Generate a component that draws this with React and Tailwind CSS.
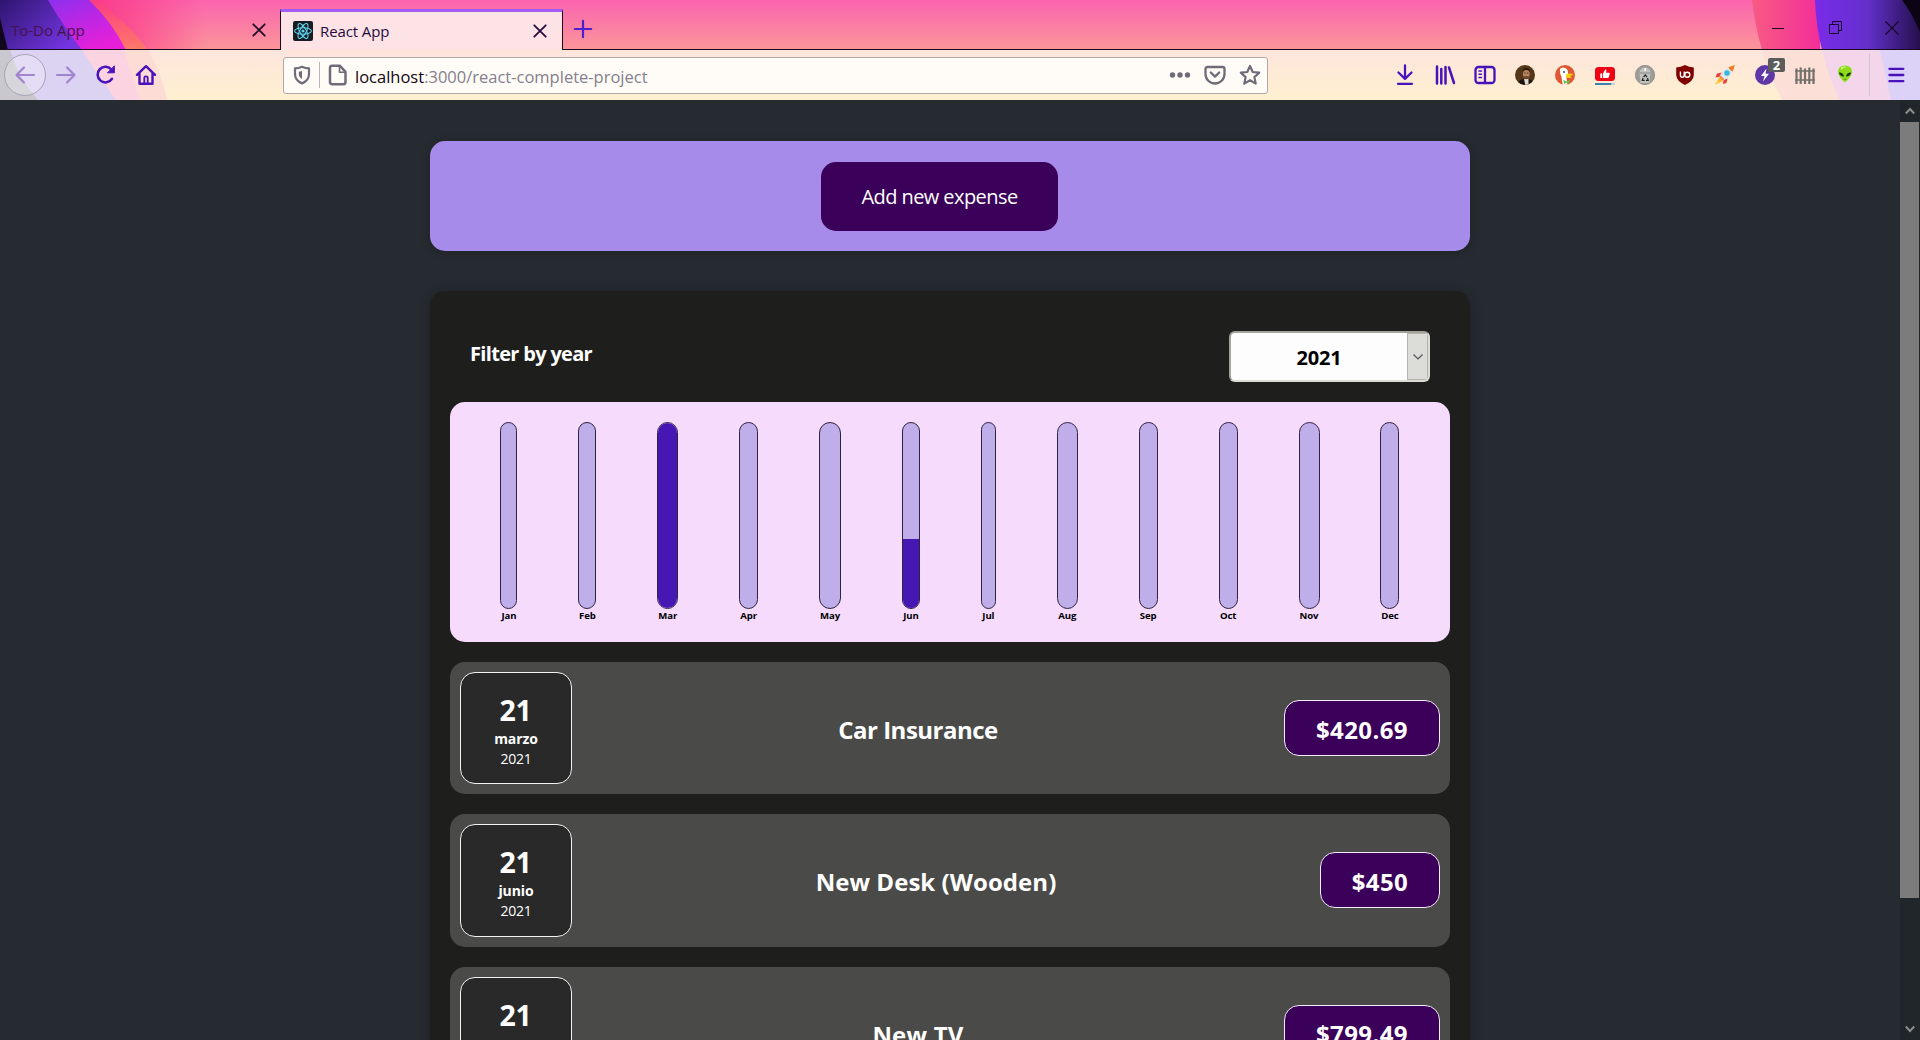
const months = [
  { name: "Jan", width: "w-[17px]", fill: 0 },
  { name: "Feb", width: "w-[18px]", fill: 0 },
  { name: "Mar", width: "w-[21px]", fill: 100 },
  { name: "Apr", width: "w-[19px]", fill: 0 },
  { name: "May", width: "w-[22px]", fill: 0 },
  { name: "Jun", width: "w-[18px]", fill: 37.5 },
  { name: "Jul", width: "w-[15px]", fill: 0 },
  { name: "Aug", width: "w-[21px]", fill: 0 },
  { name: "Sep", width: "w-[19px]", fill: 0 },
  { name: "Oct", width: "w-[19px]", fill: 0 },
  { name: "Nov", width: "w-[21px]", fill: 0 },
  { name: "Dec", width: "w-[19px]", fill: 0 },
];

const expenses = [
  { day: "21", month: "marzo", year: "2021", title: "Car Insurance", amount: "$420.69", tracking: "tracking-[-0.5px]", priceWidth: "w-[156px]" },
  { day: "21", month: "junio", year: "2021", title: "New Desk (Wooden)", amount: "$450", tracking: "tracking-[0.05px]", priceWidth: "w-[120px]" },
  { day: "21", title: "New TV", amount: "$799.49", tracking: "tracking-[0.2px]", priceWidth: "w-[156px]" },
];

/* ---------- Browser theme artwork ---------- */

function ThemeArt() {
  return (
    <svg className="absolute inset-0" width="1920" height="100" viewBox="0 0 1920 100" aria-hidden="true">
      <defs>
        <linearGradient id="pink" x1="0" y1="0" x2="0" y2="1">
          <stop offset="0" stopColor="#fb64ae" />
          <stop offset="0.5" stopColor="#fa7da4" />
          <stop offset="1" stopColor="#fb969a" />
        </linearGradient>
        <linearGradient id="indigoL" x1="0" y1="0" x2="1" y2="0.6">
          <stop offset="0" stopColor="#2d1670" />
          <stop offset="1" stopColor="#7434e0" />
        </linearGradient>
        <linearGradient id="violetL" x1="0" y1="0" x2="0.6" y2="1">
          <stop offset="0" stopColor="#8a30f0" />
          <stop offset="1" stopColor="#e81fd8" />
        </linearGradient>
        <linearGradient id="hotL" gradientUnits="userSpaceOnUse" x1="90" y1="0" x2="200" y2="-15">
          <stop offset="0" stopColor="#fb3a88" />
          <stop offset="1" stopColor="#fb3a88" stopOpacity="0" />
        </linearGradient>
        <linearGradient id="orangeL" x1="0" y1="0" x2="0" y2="1">
          <stop offset="0" stopColor="#fb3c84" />
          <stop offset="1" stopColor="#fd7a68" />
        </linearGradient>
        <linearGradient id="hotR" x1="0" y1="0" x2="1" y2="0">
          <stop offset="0" stopColor="#f85a84" />
          <stop offset="1" stopColor="#f22e98" />
        </linearGradient>
        <linearGradient id="indigoR" x1="0" y1="0" x2="1" y2="0">
          <stop offset="0" stopColor="#7a2bea" />
          <stop offset="0.5" stopColor="#6430cc" />
          <stop offset="1" stopColor="#24104c" />
        </linearGradient>
        <linearGradient id="wash" x1="0" y1="0" x2="0" y2="1">
          <stop offset="0" stopColor="#fde5dc" />
          <stop offset="1" stopColor="#fff0d0" />
        </linearGradient>
      </defs>
      <rect width="1920" height="50" fill="url(#pink)" />
      <path d="M84 0H260L220 50H120Z" fill="url(#hotL)" />
      <path d="M88 0H96Q128 22 148 50H120Z" fill="url(#orangeL)" />
      <path d="M40 0H89Q112 22 126 50H70Z" fill="url(#violetL)" />
      <path d="M0 0H48Q62 24 82 50H0Z" fill="url(#indigoL)" />
      <path d="M0 18L8 50H0Z" fill="#10061e" />
      <path d="M1752 0H1820V50H1762Q1755 25 1752 0Z" fill="url(#hotR)" />
      <path d="M1815 0H1920V50H1822Q1816 26 1815 0Z" fill="url(#indigoR)" />
      <path d="M1902 0H1920V32Q1913 15 1902 0Z" fill="#0c0414" />
      <rect y="50" width="1920" height="50" fill="url(#wash)" />
      <path d="M0 50H148Q162 74 167 100H0Z" fill="#fcdcd4" />
      <path d="M0 50H124L140 100H0Z" fill="#fcd3e0" />
      <path d="M0 50H82Q98 76 116 100H0Z" fill="#dcd2f2" />
      <path d="M0 50H10Q18 78 38 100H0Z" fill="#c9c8cf" />
      <path d="M1762 50H1920V100H1782Q1770 76 1762 50Z" fill="#fcdfd6" />
      <path d="M1822 50H1920V100H1840Q1828 76 1822 50Z" fill="#f3d6ea" />
      <path d="M1880 50H1920V100H1891Q1886 76 1880 50Z" fill="#dcd2f8" />
    </svg>
  );
}

/* ---------- Browser icons ---------- */

function Icon({ size = 22, width = 2.2, className = "", children }) {
  return (
    <svg className={className} width={size} height={size} viewBox="0 0 22 22" fill="none" stroke="currentColor" strokeWidth={width} strokeLinecap="round" strokeLinejoin="round">
      {children}
    </svg>
  );
}

const ArrowLeft = () => (<Icon><path d="M20 11H2.5M10 3.5L2.5 11L10 18.5" /></Icon>);
const ArrowRight = () => (<Icon><path d="M2 11H19.5M12 3.5L19.5 11L12 18.5" /></Icon>);
const Reload = () => (
  <Icon width={2.5}>
    <path d="M17 14.8A7.8 7.8 0 1 1 16.6 5.8" />
    <path d="M19.4 2.2V8.8H12.8Z" fill="currentColor" strokeWidth="1" />
  </Icon>
);
const Home = () => (
  <Icon width={2.4}>
    <path d="M2 10.8L11 2.2L20 10.8M4.5 9.5V19.8H17.5V9.5" />
    <path d="M9.3 19.5V13.6Q9.3 12.3 11 12.3Q12.7 12.3 12.7 13.6V19.5" strokeWidth="1.8" />
  </Icon>
);
const Close = () => (<Icon size={14} width={2.8}><path d="M2 2L20 20M20 2L2 20" /></Icon>);
const Plus = () => (<Icon size={20} width={2.4}><path d="M11 2V20M2 11H20" /></Icon>);
const Shield = () => (
  <Icon size={20} width={2.4}>
    <path d="M11 2C13.5 3.2 16 3.8 18.7 3.8V10C18.7 15 15.5 18.5 11 20.2C6.5 18.5 3.3 15 3.3 10V3.8C6 3.8 8.5 3.2 11 2Z" />
    <path d="M11 6.500V15.500C8.500 14 7.500 12 7.500 10V7.300Z" fill="currentColor" stroke="none" />
  </Icon>
);
const Page = () => (
  <Icon size={22} width={2.5}>
    <path d="M5 1.8H13L18.500 7.800V18Q18.500 20.300 16.300 20.300H5.200Q3 20.300 3 18V4Q3 1.800 5 1.800Z" />
    <path d="M12.500 2V8.300H18.300" strokeWidth="1.600" />
  </Icon>
);
const Dots = () => (
  <svg width="22" height="8" viewBox="0 0 22 8" fill="currentColor">
    <circle cx="3.500" cy="4" r="2.700" /><circle cx="11" cy="4" r="2.700" /><circle cx="18.500" cy="4" r="2.700" />
  </svg>
);
const Pocket = () => (
  <Icon width={2.3}>
    <path d="M3.500 3H18.500Q20.500 3 20.500 5V10A9.500 9.500 0 0 1 1.500 10V5Q1.500 3 3.500 3Z" />
    <path d="M6.800 8.500L11 12.600L15.200 8.500" />
  </Icon>
);
const Star = () => (
  <Icon width={2.2}>
    <path d="M11 2L13.700 8L20.200 8.700L15.400 13.100L16.700 19.600L11 16.300L5.300 19.600L6.600 13.100L1.800 8.700L8.300 8Z" />
  </Icon>
);
const Download = () => (<Icon width={2.3}><path d="M11 1.500V14.500M4.500 8.500L11 14.800L17.500 8.500M4 19.800H18" /></Icon>);
const Library = () => (<Icon width={2.5}><path d="M3 2.500V19.500M7.300 5V19.500M11.500 3V19.500M15 3.500L20 19" /></Icon>);
const Sidebar = () => (
  <Icon width={2.3}>
    <rect x="1.500" y="3" width="19" height="16" rx="3" />
    <path d="M11 3V19" /><path d="M5 7H7.500M5 10.300H7.500M5 13.500H7.500" strokeWidth="1.500" />
  </Icon>
);
const Menu = () => (<Icon size={18} width={2.8}><path d="M3 3.500H20M3 11H20M3 18.500H20" /></Icon>);

function ReactBadge() {
  return (
    <svg width="20" height="20" viewBox="0 0 20 20" fill="none" stroke="#5fd3ee" strokeWidth="1.100">
      <rect width="20" height="20" rx="2" fill="#161c22" stroke="none" />
      <ellipse cx="10" cy="10" rx="8.400" ry="3.200" />
      <ellipse cx="10" cy="10" rx="8.400" ry="3.200" transform="rotate(60 10 10)" />
      <ellipse cx="10" cy="10" rx="8.400" ry="3.200" transform="rotate(120 10 10)" />
      <circle cx="10" cy="10" r="1.600" fill="#5fd3ee" stroke="none" />
    </svg>
  );
}

function Avatar() {
  return (
    <svg width="20" height="20" viewBox="0 0 20 20">
      <defs><clipPath id="avatar"><circle cx="10" cy="10" r="10" /></clipPath></defs>
      <g clipPath="url(#avatar)">
        <rect width="20" height="20" fill="#543618" />
        <path d="M2 20Q4 14.500 8.500 14L13 13.500Q18 15 19 20Z" fill="#18140f" />
        <path d="M9 14L10.300 20H13.500L13.500 13.500Z" fill="#e0dad2" />
        <ellipse cx="11.300" cy="9" rx="3.400" ry="5" fill="#b98562" />
        <path d="M7.700 7Q7.500 3 11.300 3Q15.200 3 14.900 7Q13.500 5 11.300 5Q9 5 7.700 7Z" fill="#2a180c" />
        <path d="M8.200 10.800Q9.500 12 11.300 11Q13 12 14.400 10.800Q13.800 14.300 11.300 14.300Q8.800 14.300 8.200 10.800Z" fill="#6a4028" />
        <path d="M9.300 8H10.600M12.100 8H13.400" stroke="#2a180c" strokeWidth="0.900" />
      </g>
    </svg>
  );
}

function Duck() {
  return (
    <svg width="20" height="20" viewBox="0 0 20 20">
      <circle cx="10" cy="10" r="10" fill="#de5833" />
      <path d="M5 4Q7 1.500 10 3Q13.500 4.500 13 9L11.500 13L12.500 19.600Q10 20.400 7.600 19.600L6.500 12Q4.500 8 5 4Z" fill="#fff" />
      <path d="M11 9.200Q15 8 18.500 9Q17.500 10.500 15 11Q17 12 16.500 12.800Q13 13.500 11 12Z" fill="#fdd20a" />
      <path d="M8.500 15L11.500 16.500L14.500 14.800V18.500L11.500 17.500L9 19Z" fill="#65bc46" />
      <circle cx="9" cy="7" r="1" fill="#2d4f8e" />
    </svg>
  );
}

function ThumbVideo() {
  return (
    <svg width="20" height="20" viewBox="0 0 20 20">
      <rect y="2" width="20" height="14" rx="3.500" fill="#f00014" />
      <path d="M5.300 8.500H7.200V13H5.300ZM8 8.500L10.300 4.300Q11.800 4.300 11.300 6.500L11 7.700H14Q15 8 14.700 9.300L13.800 12.300Q13.500 13 12.500 13H8Z" fill="#fff" />
      <rect y="18" width="16.500" height="2" fill="#3c82ae" /><rect x="16.500" y="18" width="3.500" height="2" fill="#c2d0d4" />
    </svg>
  );
}

function Recycler() {
  return (
    <svg width="20" height="20" viewBox="0 0 20 20" fill="none">
      <circle cx="10" cy="10" r="9.700" fill="#9c9c98" stroke="#7b7b78" strokeWidth="0.600" />
      <path d="M4.500 8Q4.500 3 10 2.500Q15.500 3 15.500 8L14.500 18H5.500Z" fill="#c2c2be" />
      <path d="M4.500 8H15.500" stroke="#8c8c8c" /><path d="M10.200 3V6" stroke="#fff" strokeWidth="1.500" />
      <path d="M8.600 12L10.300 9.900L12 12M12.500 13L13.200 15.300H10.900M9.600 15.300H7.300L8 13" stroke="#222" strokeWidth="1.200" />
    </svg>
  );
}

function UShield() {
  return (
    <svg width="20" height="20" viewBox="0 0 20 20" fill="none" stroke="#fff" strokeWidth="1.400">
      <path d="M10 0Q14 2.300 18.800 2.500V10Q18.500 16 10 20Q1.500 16 1.200 10V2.500Q6 2.300 10 0Z" fill="#800000" stroke="none" />
      <path d="M5.400 6.500V10Q5.400 12.300 7.300 12.300Q9.200 12.300 9.200 10V6.500" /><circle cx="12.300" cy="9.800" r="2.500" />
    </svg>
  );
}

function Rocket() {
  return (
    <svg width="20" height="20" viewBox="0 0 20 20">
      <path d="M4.500 12L0 19.800L8 16Z" fill="#fdb62e" />
      <path d="M2.500 16L1 19L4.500 17Z" fill="#f4e04a" />
      <path d="M6.500 7.500L2 8.500L0.500 12.500L6 11.500ZM12.500 13.500L11.500 18L8 19L8.500 14.500Z" fill="#e8423a" />
      <path d="M4.500 12Q7 4.500 14 2L18 6Q15.500 13 8 15.500Z" fill="#dfe6ea" />
      <path d="M13.500 2.200L19.800 0L17.800 6.500Q14.500 5.500 13.500 2.200Z" fill="#ee7a22" />
      <circle cx="12" cy="8" r="2.700" fill="#35b5e0" /><path d="M5.500 10.500L9.500 14.500L7.500 15.600L4.400 12.500Z" fill="#ef8a3c" />
    </svg>
  );
}

function Bolt() {
  return (
    <svg width="20" height="20" viewBox="0 0 20 20">
      <circle cx="10" cy="10" r="10" fill="#5f38a8" />
      <path d="M11.500 3.500L6 11H9.500L8 16.500L14 8.800H10.500Z" fill="#fff" />
    </svg>
  );
}

function Fence() {
  return (
    <svg width="20" height="18" viewBox="0 0 20 18" fill="none" stroke="#74706c">
      <path d="M1.500 18V2.500M5.700 18V1.500M10 18V2.500M14.300 18V1.500M18.500 18V2.500" strokeWidth="2.200" />
      <path d="M0 5H20M0 14H20" strokeWidth="1.500" />
    </svg>
  );
}

function Alien() {
  return (
    <svg width="16" height="18" viewBox="0 0 16 18">
      <path d="M8 0.500Q15 0.800 15 7Q14.500 12 8 17.500Q1.500 12 1 7Q1 0.800 8 0.500Z" fill="#8fdc1e" />
      <path d="M4 2.500Q7 0.800 10 2Q6 2.500 4 5Z" fill="#ccf580" />
      <path d="M2 7.200Q6.500 7.500 7 11.500Q2.500 11.500 2 7.200ZM14 7.200Q9.500 7.500 9 11.500Q13.500 11.500 14 7.200Z" fill="#15331a" />
      <path d="M6.500 14.300H9.500" stroke="#4a8a14" strokeWidth="0.800" />
    </svg>
  );
}

/* ---------- Browser chrome ---------- */

function Slot({ children }) {
  return <div className="relative flex h-full w-10 shrink-0 items-center justify-center">{children}</div>;
}

function TabStrip() {
  return (
    <div className="flex h-[50px] items-end text-[15px] leading-5 text-[#260a3e]">
      <div className="flex h-10 w-[280px] items-center justify-between border-b border-[#1a0a20] pr-3.5 pl-[11px] text-[#45104c]">
        <span>To-Do App</span>
        <span className="text-[#200a28]"><Close /></span>
      </div>
      <div className="flex h-[41px] w-[283px] items-center justify-between border-x border-t-[3px] border-x-[#1a0a20] border-t-[#a45cf6] bg-[#fde3e6] pr-[15px] pl-3">
        <span className="flex items-center gap-[7px]">
          <ReactBadge />
          <span className="tracking-[-0.1px]">React App</span>
        </span>
        <Close />
      </div>
      <div className="flex h-10 flex-1 items-center border-b border-[#1a0a20] pl-2.5 text-[#4c1fd0]">
        <div className="-mt-0.5"><Plus /></div>
        <div className="ml-auto flex items-center text-[#1c0626]">
          <svg className="-mt-1 mr-[45px]" width="12" height="14" viewBox="0 0 12 14" stroke="currentColor"><path d="M0 7.500H12" /></svg>
          <svg className="-mt-1 mr-[43px]" width="13" height="13" viewBox="0 0 13 13" fill="none" stroke="currentColor"><path d="M0.500 3.500H9.500V12.500H0.500ZM3.500 3.500V0.500H12.500V9.500H9.500" /></svg>
          <svg className="-mt-1 mr-[21px]" width="14" height="14" viewBox="0 0 14 14" stroke="currentColor" strokeWidth="1.200"><path d="M0.500 0.500L13.500 13.500M13.500 0.500L0.500 13.500" /></svg>
        </div>
      </div>
    </div>
  );
}

function Toolbar() {
  return (
    <div className="flex h-[50px] items-center text-[#4a12bb]">
      <div className="ml-1 flex size-[42px] shrink-0 items-center justify-center rounded-full border border-[#a9a3b5] bg-white/25 text-[#a184cf]">
        <ArrowLeft />
      </div>
      <div className="flex w-10 shrink-0 justify-center text-[#a184cf]"><ArrowRight /></div>
      <Slot><Reload /></Slot>
      <Slot><Home /></Slot>

      <div className="ml-[117px] flex h-[37px] w-[985px] shrink-0 items-center rounded-[3px] border border-[#b3a6a6] bg-[#fffcf8] text-[#6f6b78]">
        <div className="flex w-[35px] justify-center"><Shield /></div>
        <div className="h-[26px] w-px bg-[#b8b4b8]" />
        <div className="ml-[7px]"><Page /></div>
        <div className="ml-1.5 pt-[3px] text-[16.5px] leading-5 whitespace-nowrap text-[#85808c]">
          <span className="text-[#14060f]">localhost</span>:3000/react-complete-project
        </div>
        <div className="ml-auto flex items-center">
          <div className="flex w-[35px] justify-center"><Dots /></div>
          <div className="flex w-[35px] justify-center"><Pocket /></div>
          <div className="flex w-[35px] justify-center"><Star /></div>
        </div>
      </div>

      <div className="ml-[117px] flex h-full">
        <Slot><Download /></Slot>
        <Slot><Library /></Slot>
        <Slot><Sidebar /></Slot>
        <Slot><Avatar /></Slot>
        <Slot><Duck /></Slot>
        <Slot><ThumbVideo /></Slot>
        <Slot><Recycler /></Slot>
        <Slot><UShield /></Slot>
        <Slot><Rocket /></Slot>
        <Slot>
          <Bolt />
          <span className="absolute top-2 left-[23px] flex h-[14px] w-[17px] items-center justify-center rounded-[2px] bg-[#5d5c5c] text-[13px] leading-none font-bold text-white">2</span>
        </Slot>
        <Slot><Fence /></Slot>
        <Slot><div className="-mt-0.5"><Alien /></div></Slot>
      </div>
      <div className="ml-1 h-[42px] w-px bg-[#cfc0cc]" />
      <div className="ml-[17px]"><Menu /></div>
    </div>
  );
}

/* ---------- Page content ---------- */

function NewExpense() {
  return (
    <div className="flex h-[110px] shrink-0 items-center justify-center rounded-[15px] bg-[#a78bea] pr-[21px] shadow-[0_1px_8px_rgba(0,0,0,0.25)]">
      <button className="h-[69px] w-[237px] rounded-[15px] bg-[#3b0059] pt-0.5 text-xl tracking-[-0.57px] text-white">Add new expense</button>
    </div>
  );
}

function YearFilter() {
  return (
    <div className="flex h-[51px] items-center justify-between px-5">
      <span className="pb-1.5 text-xl leading-7 font-bold tracking-[-0.68px] text-white">Filter by year</span>
      <div className="flex h-[51px] w-[201px] overflow-hidden rounded-md border-2 border-[#a3a39c] border-r-[#dcdcd4] border-b-[#dcdcd4] bg-[#fdfdfd]">
        <div className="flex flex-1 items-center justify-center pt-0.5 text-xl font-bold tracking-[-0.2px] text-black">2021</div>
        <div className="flex w-[21px] items-center justify-center border border-[#b4b4ac] bg-[#dcdcd8]">
          <svg width="10" height="6" viewBox="0 0 10 6" fill="none" stroke="#555" strokeWidth="1.200"><path d="M0.500 0.500L5 5L9.500 0.500" /></svg>
        </div>
      </div>
    </div>
  );
}

function Chart() {
  return (
    <div className="mt-5 flex h-60 justify-around rounded-[15px] bg-[#f6dbfd] p-5">
      {months.map((m) => (
        <div key={m.name} className={`flex flex-col items-center ${m.width}`}>
          <div className="flex h-[187px] w-full flex-col justify-end overflow-hidden rounded-full border border-[#2d2540] bg-[#bfaeea]">
            <div className="bg-[#4717b3]" style={{ height: `${m.fill}%` }} />
          </div>
          <div className="mt-px text-[9.6px] leading-3 font-bold tracking-[-0.1px] text-black">{m.name}</div>
        </div>
      ))}
    </div>
  );
}

function ExpenseItem({ item }) {
  return (
    <div className="mt-5 flex h-[132.3px] items-center justify-between rounded-[15px] bg-[#4a4a48] p-2.5 text-white">
      <div className="flex h-full w-28 shrink-0 flex-col items-center rounded-[15px] border border-[#f2f2f2] bg-[#292929] pt-[19px]">
        <span className="pr-px text-[28.5px] leading-9 font-bold tracking-[-0.3px]">{item.day}</span>
        {item.month && <span className="pt-px text-sm leading-5 font-bold tracking-[-0.1px]">{item.month}</span>}
        {item.year && <span className="text-sm leading-5 tracking-[-0.2px]">{item.year}</span>}
      </div>
      <h2 className={`pt-1 pr-5 text-2xl font-bold ${item.tracking}`}>{item.title}</h2>
      <div className={`flex h-[56px] items-center justify-center rounded-[15px] border border-[#f4ecf8] bg-[#3b0059] pt-[3px] text-2xl font-bold tracking-[0.4px] ${item.priceWidth}`}>
        {item.amount}
      </div>
    </div>
  );
}

function Scrollbar() {
  return (
    <div className="flex w-5 shrink-0 flex-col bg-[#21262a]">
      <svg className="my-1.5 ml-[5px] shrink-0" width="10" height="10" viewBox="0 0 10 10" fill="none" stroke="#8c8c8c" strokeWidth="2"><path d="M0.800 7.500L5 3L9.200 7.500" /></svg>
      <div className="h-[776px] w-[19px] shrink-0 bg-[#7c7c7c]" />
      <svg className="mt-auto mb-1.5 ml-[5px] shrink-0" width="10" height="10" viewBox="0 0 10 10" fill="none" stroke="#8c8c8c" strokeWidth="2"><path d="M0.800 2.500L5 7L9.200 2.500" /></svg>
    </div>
  );
}

export default function App() {
  return (
    <div className="flex h-[1040px] w-[1920px] flex-col overflow-hidden bg-[#262b31] font-['Open_Sans','Noto_Sans',sans-serif]">
      <header className="relative h-[100px] shrink-0">
        <ThemeArt />
        <div className="relative">
          <TabStrip />
          <Toolbar />
        </div>
      </header>
      <div className="flex min-h-0 flex-1">
        <main className="flex min-w-0 flex-1 justify-center overflow-hidden pt-[41px]">
          <div className="flex w-[1040px] flex-col">
            <NewExpense />
            <section className="mt-10 shrink-0 rounded-[15px] bg-[#1e1e1d] px-5 pt-10 pb-5 shadow-[0_1px_12px_rgba(0,0,0,0.25)]">
              <YearFilter />
              <Chart />
              {expenses.map((e) => <ExpenseItem key={e.title} item={e} />)}
            </section>
          </div>
        </main>
        <Scrollbar />
      </div>
    </div>
  );
}
